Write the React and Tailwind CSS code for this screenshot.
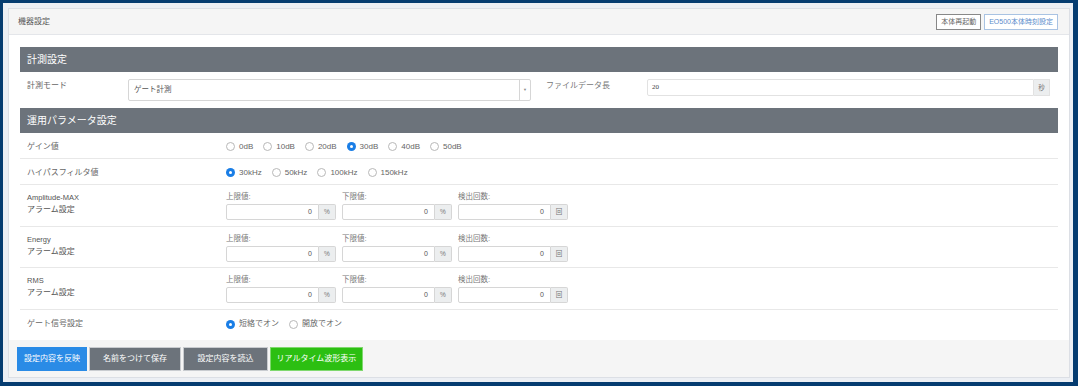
import { useState } from "react"

const font = { fontFamily: '"Liberation Sans", "Noto Sans CJK JP", sans-serif' }

function Radio ({ checked, label, onClick }) {
    return (
        <label onClick={onClick} className="flex items-center gap-[4px] cursor-pointer">
            {checked ? (
                <span className="w-[9px] h-[9px] rounded-full bg-[#1a7ee6] flex items-center justify-center">
                    <span className="w-[3px] h-[3px] rounded-full bg-white" />
                </span>
            ) : (
                <span className="w-[9px] h-[9px] rounded-full border border-[#b8b8b8] bg-white" />
            )}
            <span className="text-[8px] text-[#666]">{label}</span>
        </label>
    )
}

function AddonInput ({ label, unit }) {
    return (
        <div className="flex flex-col w-[110px]">
            <span className="text-[7.5px] leading-[12px] text-[#777]">{label}</span>
            <div className="flex h-[16px] mt-[1px]">
                <div className="flex-1 border border-[#d6d6d6] rounded-l-[2px] flex items-center justify-end pr-[6px] text-[7px] text-[#555]">0</div>
                <div className="w-[17px] border border-l-0 border-[#d6d6d6] bg-[#eceeef] rounded-r-[2px] flex items-center justify-center text-[6.5px] text-[#777]">{unit}</div>
            </div>
        </div>
    )
}

function AlarmRow ({ title, h }) {
    return (
        <div className={`flex px-[7px] pt-[6px] border-b border-[#e8e8e8] ${h}`}>
            <div className="w-[199px] text-[#555] leading-[12px] pt-[1px]">
                <div className="text-[7.5px]">{title}</div>
                <div className="text-[8px]">アラーム設定</div>
            </div>
            <div className="flex gap-[6px]">
                <AddonInput label="上限値:" unit="%" />
                <AddonInput label="下限値:" unit="%" />
                <AddonInput label="検出回数:" unit="回" />
            </div>
        </div>
    )
}

function App () {
    const [gain, setGain] = useState("30dB")
    const [hpf, setHpf] = useState("30kHz")
    const [gate, setGate] = useState("短絡でオン")

    return (
        <div style={font} className="w-[1078px] h-[386px] bg-[#053c70] pt-[3px] pl-[3px] pr-[5px] pb-[4px]">
            <div className="w-full h-full bg-[#eceff4] pt-[5px] pl-[5px] pr-[3px]">
                <div className="w-[1062px] border border-[#dcdfe5] bg-white">
                    {/* header */}
                    <div className="h-[26px] bg-[#f5f5f5] border-b border-[#e4e6ea] flex items-center justify-between pl-[9px] pr-[11px]">
                        <span className="text-[8px] text-[#555] pt-[1px]">機器設定</span>
                        <div className="flex gap-[3px] pt-[1px]">
                            <button className="h-[16px] px-[4px] border border-[#888] bg-white text-[7px] text-[#666]">本体再起動</button>
                            <button className="h-[16px] px-[4px] border border-[#a9c3e3] bg-white text-[7px] text-[#5b8ccb]">EO500本体時刻設定</button>
                        </div>
                    </div>

                    {/* body */}
                    <div className="px-[11px] pt-[12px]">
                        <div className="h-[25px] bg-[#6c737b] flex items-center px-[7px] text-[10px] text-white">計測設定</div>
                        <div className="h-[36px] flex px-[7px] pt-[7px]">
                            <div className="w-[101px] pt-[1px] text-[8px] text-[#666]">計測モード</div>
                            <div className="w-[403px] h-[22px] border border-[#d6d6d6] rounded-[2px] flex">
                                <div className="flex-1 flex items-center pl-[5px] text-[7.5px] text-[#555]">ゲート計測</div>
                                <div className="w-[11px] border-l border-[#d6d6d6] flex items-center justify-center text-[4px] text-[#888]">▼</div>
                            </div>
                            <div className="w-[101px] ml-[15px] pt-[1px] text-[8px] text-[#777]">ファイルデータ長</div>
                            <div className="flex-1 mr-[1px] h-[17px] flex">
                                <div className="flex-1 border border-[#e2e2e2] rounded-l-[2px] flex items-center pl-[4px] text-[7px] text-[#444]" style={{ fontFamily: '"Liberation Serif", serif' }}>20</div>
                                <div className="w-[16px] border border-l-0 border-[#e2e2e2] bg-[#eceeef] flex items-center justify-center text-[6.5px] text-[#777]">秒</div>
                            </div>
                        </div>

                        <div className="h-[25px] bg-[#6c737b] flex items-center px-[7px] text-[10px] text-white">運用パラメータ設定</div>

                        <div className="h-[26px] flex items-center px-[7px] pt-[2px] border-b border-[#e8e8e8]">
                            <div className="w-[199px] text-[8px] text-[#666]">ゲイン値</div>
                            <div className="flex gap-[10px]">
                                {["0dB", "10dB", "20dB", "30dB", "40dB", "50dB"].map((v) => (
                                    <Radio key={v} label={v} checked={gain === v} onClick={() => setGain(v)} />
                                ))}
                            </div>
                        </div>

                        <div className="h-[26px] flex items-center px-[7px] pt-[2px] border-b border-[#e8e8e8]">
                            <div className="w-[199px] text-[8px] text-[#666]">ハイパスフィルタ値</div>
                            <div className="flex gap-[10px]">
                                {["30kHz", "50kHz", "100kHz", "150kHz"].map((v) => (
                                    <Radio key={v} label={v} checked={hpf === v} onClick={() => setHpf(v)} />
                                ))}
                            </div>
                        </div>

                        <AlarmRow title="Amplitude-MAX" h="h-[42px]" />
                        <AlarmRow title="Energy" h="h-[41px]" />
                        <AlarmRow title="RMS" h="h-[42px]" />

                        <div className="h-[30px] flex items-center px-[7px] pb-[2px]">
                            <div className="w-[199px] text-[8px] text-[#666]">ゲート信号設定</div>
                            <div className="flex gap-[10px]">
                                {["短絡でオン", "開放でオン"].map((v) => (
                                    <Radio key={v} label={v} checked={gate === v} onClick={() => setGate(v)} />
                                ))}
                            </div>
                        </div>
                    </div>

                    {/* footer */}
                    <div className="h-[37px] bg-[#f5f5f5] flex items-start pt-[7px] pl-[8px] gap-[2px]">
                        <button className="h-[24px] w-[70px] bg-[#2a8be6] text-white text-[8px]">設定内容を反映</button>
                        <button className="h-[24px] w-[92px] bg-[#6c737b] border border-[#c9ccd0] text-white text-[8px]">名前をつけて保存</button>
                        <button className="h-[24px] w-[85px] bg-[#6c737b] border border-[#c9ccd0] text-white text-[8px]">設定内容を読込</button>
                        <button className="h-[24px] w-[93px] bg-[#2cbf12] border border-[#7fd86e] text-white text-[8px]">リアルタイム波形表示</button>
                    </div>
                </div>
            </div>
        </div>
    )
}

export default App
